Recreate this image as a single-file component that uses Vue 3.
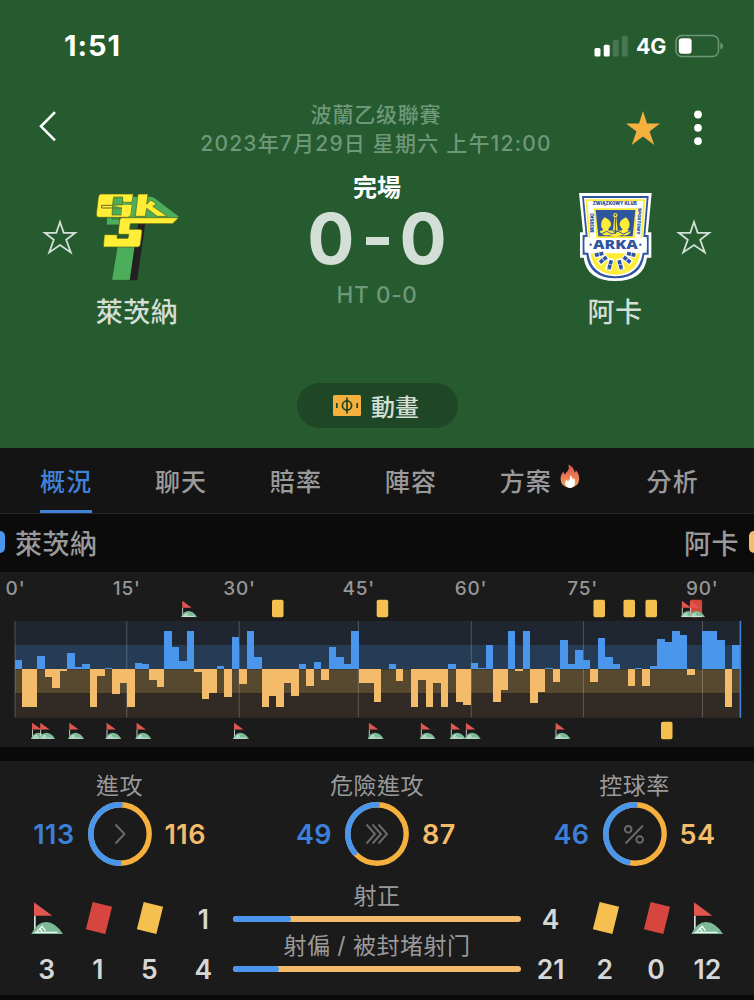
<template>
  <div class="page">
    <svg class="defs" width="0" height="0">
      <symbol id="corner" viewBox="0 0 32 32">
        <path d="M3 13.5h1.700V31H3z" fill="#d9dedb" />
        <path d="M0.3 32Q6 20.2 15 20Q24.500 20.2 32 32z" fill="#7dbb98" />
        <path d="M3.500 30.400H26.500M6 29.500L11.200 24.300L14.600 28.800M8 26.500Q10.500 27 10.800 30" fill="none" stroke="#f1f7f3" stroke-width="1.400" />
        <path d="M3 0.3L21.300 13.700H3z" fill="#e25650" />
      </symbol>
    </svg>

    <header class="header">
      <div class="status-bar">
        <span class="clock">1:51</span>
        <div class="status-icons">
          <svg width="35" height="22" viewBox="0 0 35 22">
            <rect x="0.500" y="13" width="6" height="8.500" rx="1.500" fill="#fff" />
            <rect x="9.700" y="9.700" width="6" height="11.800" rx="1.500" fill="#fff" />
            <rect x="18.800" y="5" width="6" height="16.500" rx="1.500" fill="#477653" />
            <rect x="27.800" y="0.700" width="6" height="20.800" rx="1.500" fill="#477653" />
          </svg>
          <span class="network">4G</span>
          <svg width="49" height="24" viewBox="0 0 49 24">
            <rect x="1" y="1.500" width="42.500" height="21" rx="6" fill="none" stroke="#709679" stroke-width="1.500" />
            <rect x="3.800" y="4.200" width="12.800" height="15.600" rx="3" fill="#fff" />
            <path d="M45.300 8.500Q48 9.500 48 12T45.300 15.500z" fill="#709679" />
          </svg>
        </div>
      </div>

      <div class="title-row">
        <svg class="back" width="20" height="32" viewBox="0 0 20 32">
          <path d="M17 2.200L3 16.300L17 30.300" fill="none" stroke="#fff" stroke-width="2.600" />
        </svg>
        <div class="match-info">
          <div class="league">波蘭乙级聯賽</div>
          <div class="date">2023年7月29日 星期六 上午12:00</div>
        </div>
        <svg class="fav" width="34" height="34" viewBox="0 0 34 34">
          <path d="M17 0L21 12.500H34L23.500 20.500L28.300 34L17 25.500L5.700 34L10.500 20.500L0 12.500H13z" fill="#f5b03e" />
        </svg>
        <svg class="more" width="8" height="36" viewBox="0 0 8 36">
          <circle v-for="cy in [4.5, 17.8, 31.100]" :key="cy" cx="4" :cy="cy" r="3.900" fill="#fff" />
        </svg>
      </div>

      <div class="score-row">
        <svg class="team-star" width="36" height="36" viewBox="0 0 36 36">
          <path :d="starPath" fill="none" stroke="#d3ded5" stroke-width="1.800" />
        </svg>
        <div class="team">
          <svg width="85" height="88" viewBox="195 68 255 264">
            <path d="M262 225H316L300 330H245z" fill="#4cae5b" stroke="#1f4a26" stroke-width="2" />
            <path d="M325 158H346L322 326Q321 330 316 330H300L314 228z" fill="#231f20" />
            <path d="M230 140H270V164H229zM246 78H362Q370 79 378 85L447 138L440 146H246z" fill="#4cae5b" stroke="#1f4a26" stroke-width="2" />
            <path d="M212 71H310L306 96H276V84H250L248 104H304L301 133Q300 141 292 141H206Q198 140 199 131L205 80Q206 72 212 71z" fill="#ffee35" stroke="#4b5c1a" stroke-width="2" />
            <path d="M249 80H278V104H305M248 104L246 134H275L277 113" fill="#4cae5b" stroke="#4b5c1a" stroke-width="2" />
            <path d="M248 105H215V113H277" fill="none" stroke="#6b6a1c" stroke-width="3" />
            <path d="M277 103H305L301 135H274z" fill="#ffee35" />
            <path d="M324 71H354L350 102L362 90L372 95L378 102L368 108L412 138H382L350 114L346 138H316z" fill="#ffee35" stroke="#4b5c1a" stroke-width="2" />
            <path d="M276 142H446L428 160H301L299 177H330Q337 177 336 185L331 223Q330 230 323 230H220L223 193H262L261 204H294L296 192H270Q264 192 265 184L269 150Q270 142 276 142z" fill="#ffee35" stroke="#4b5c1a" stroke-width="2" />
          </svg>
          <div class="team-name">萊茨納</div>
        </div>
        <div class="score">
          <div class="state">完場</div>
          <div class="goals"><span>0</span><i class="dash"></i><span>0</span></div>
          <div class="half">HT 0-0</div>
        </div>
        <div class="team guest">
          <svg width="73" height="88" viewBox="87 68 219 264">
            <path d="M87 68H305L294 186H304V262H291Q282 331 196 332Q110 331 101 262H90V186H99z" fill="#fff" />
            <path d="M96 77H296L286 194H296V253H283Q275 322 196 324Q117 322 109 253H98V194H107z" fill="#2f55a0" />
            <path d="M102 83H290L280 200H290V247H278Q269 316 196 318Q123 316 115 247H104V200H113z" fill="#fff" />
            <path d="M106 87H286L277 202H116zM122 249H270Q263 310 196 313Q129 310 122 249z" fill="#ffec37" />
            <path d="M112 92H280L272 202H121z" fill="#fff" />
            <path d="M132 114H261L254 203H139z" fill="#ffec37" />
            <path d="M137 119H256L248 198H145z" fill="#2f55a0" />
            <path d="M196 128a7 7 0 0 1 3 13L203 180Q212 183 218 178L209 165Q207 150 228 141Q242 155 238 170L232 179L243 183Q236 199 216 194L196 200L176 194Q156 199 149 183L160 179L154 170Q150 155 164 141Q185 150 183 165L174 178Q180 183 189 180L193 141a7 7 0 0 1 3-13z" fill="#ffec37" />
            <path d="M146 187q8 8 16 0t16 0t17 0t17 0t17 0t17 0M196 140V191M188 182h16" fill="none" stroke="#2f55a0" stroke-width="3" />
            <circle cx="196" cy="134" r="3" fill="#2f55a0" />
            <path d="M104 206H290V239H104z" fill="#fff" />
            <text x="196" y="236" class="crest-name" textLength="134" lengthAdjust="spacingAndGlyphs">ARKA</text>
            <circle cx="122" cy="223" r="3.500" fill="#2f55a0" />
            <circle cx="271" cy="223" r="3.500" fill="#2f55a0" />
            <text x="194" y="105" class="crest-small" textLength="132" lengthAdjust="spacingAndGlyphs">ZWIĄZKOWY KLUB</text>
            <text transform="translate(132 158) rotate(-90)" class="crest-small" textLength="57" lengthAdjust="spacingAndGlyphs">MORSKI</text>
            <text transform="translate(262 153) rotate(94)" class="crest-small" textLength="80" lengthAdjust="spacingAndGlyphs">SPORTOWY</text>
            <g stroke="#fff" stroke-width="18">
              <path d="M163 248L132 255M172 258L146 278M184 265L174 300M206 265L216 300M219 258L245 278M228 248L259 255" />
            </g>
            <g stroke="#2f55a0" stroke-width="11" stroke-dasharray="12 2">
              <path d="M160 249L133 255M170 260L149 277M184 270L176 298M207 270L215 298M221 260L242 277M231 249L258 255" />
            </g>
          </svg>
          <div class="team-name">阿卡</div>
        </div>
        <svg class="team-star" width="36" height="36" viewBox="0 0 36 36">
          <path :d="starPath" fill="none" stroke="#d3ded5" stroke-width="1.800" />
        </svg>
      </div>

      <button class="anim-btn">
        <svg width="28" height="21" viewBox="0 0 28 21">
          <rect width="28" height="21" rx="1.500" fill="#f5b03e" />
          <circle cx="14" cy="10.500" r="4.600" fill="none" stroke="#1f4525" stroke-width="1.700" />
          <path d="M14 2.500V18.500M3.800 8V13M24.200 8V13" stroke="#1f4525" stroke-width="1.700" />
        </svg>
        <span>動畫</span>
      </button>
    </header>

    <nav class="tabs">
      <div v-for="(tab, i) in tabs" :key="tab" class="tab" :class="{ active: i === 0 }">
        <span>{{ tab }}</span>
        <svg v-if="tab === '方案'" class="flame" width="20" height="25" viewBox="0 0 20 25">
          <defs>
            <linearGradient id="fire" x1="0" y1="0" x2="0" y2="1">
              <stop offset="0" stop-color="#e2504a" />
              <stop offset="1" stop-color="#f3a65c" />
            </linearGradient>
          </defs>
          <path d="M8.500 0.500Q14 3 14.500 8.500Q16 8 15.800 6Q19.500 10 19.200 15.500Q18.500 23 10 24Q1 23 0.600 15.500Q0.300 11 3.500 7.500Q3.500 9.800 5 10.500Q6 8.500 8 6.500Q9.500 4 8.500 0.500z" fill="url(#fire)" />
          <path d="M10.500 11Q12.500 13 12.500 15.500L14 13.800Q15.500 17 14.800 20Q13.800 23.500 10.500 24Q5.500 23.500 5.200 19.500Q5 17.500 6.500 15.500L8 17.500Q10.500 15 10.500 11z" fill="#fff" />
        </svg>
      </div>
    </nav>

    <div class="legend">
      <div class="legend-team">
        <i class="swatch home"></i>
        <span>萊茨納</span>
      </div>
      <div class="legend-team">
        <span>阿卡</span>
        <i class="swatch away"></i>
      </div>
    </div>

    <section class="momentum">
      <svg width="754" height="175" viewBox="0 0 754 175">
        <text v-for="t in ticks" :key="t.label" :x="t.x" y="22.700" class="tick">{{ t.label }}</text>

        <rect x="15" y="49" width="726" height="24" fill="#1f262f" />
        <rect x="15" y="73" width="726" height="24.400" fill="#263c54" />
        <rect x="15" y="97.400" width="726" height="23.800" fill="#574930" />
        <rect x="15" y="121.200" width="726" height="24.500" fill="#322a24" />
        <path v-for="x in gridLines" :key="x" :d="`M${x} 49V145.700`" stroke="#fff" stroke-opacity="0.220" />

        <rect
          v-for="bar in bars"
          :key="bar.x"
          :x="bar.x"
          :y="bar.y"
          :width="barWidth"
          :height="bar.h"
          :fill="bar.home ? '#4a96ec' : '#f4bc6a'"
          shape-rendering="crispEdges"
        />
        <rect x="739.600" y="49" width="1.600" height="96.700" fill="#3f82d2" />

        <template v-for="(e, i) in events" :key="i">
          <use v-if="e.type === 'corner'" href="#corner" :x="e.x" :y="e.home ? 28.7 : 150.5" width="16.500" height="16.500" />
          <rect
            v-else
            :x="e.x"
            :y="e.home ? 27.7 : 149.7"
            :width="e.type === 'red' ? 12.3 : 11.500"
            height="17.500"
            rx="1.800"
            :fill="e.type === 'red' ? '#d6463f' : '#f5c04f'"
          />
        </template>
      </svg>
    </section>

    <section class="stats">
      <div class="rings">
        <div v-for="r in rings" :key="r.title" class="ring-item">
          <div class="stat-title">{{ r.title }}</div>
          <div class="ring-row">
            <span class="home-num">{{ r.home }}</span>
            <svg width="64" height="64" viewBox="0 0 64 64">
              <circle cx="32" cy="32" r="29.200" fill="none" stroke="#f5b03e" stroke-width="5.400" />
              <path :d="arc(r.home / (r.home + r.away))" fill="none" stroke="#4a96ec" stroke-width="5.600" stroke-linecap="round" />
              <path :d="r.icon" fill="none" stroke="#6c6c6c" stroke-width="1.900" />
            </svg>
            <span class="away-num">{{ r.away }}</span>
          </div>
        </div>
      </div>

      <div class="details">
        <div class="side">
          <div v-for="c in homeCounts" :key="c.type" class="count">
            <svg v-if="c.type === 'corner'" class="count-icon" width="32" height="32"><use href="#corner" /></svg>
            <i v-else class="card" :class="c.type"></i>
            <span class="num">{{ c.value }}</span>
          </div>
          <div class="shots">
            <span class="num">1</span>
            <span class="num">4</span>
          </div>
        </div>

        <div class="bars">
          <div v-for="s in shots" :key="s.title" class="shot">
            <div class="stat-title">{{ s.title }}</div>
            <div class="track">
              <div class="fill" :style="{ width: s.percent + '%' }"></div>
            </div>
          </div>
        </div>

        <div class="side">
          <div class="shots">
            <span class="num">4</span>
            <span class="num">21</span>
          </div>
          <div v-for="c in awayCounts" :key="c.type" class="count">
            <svg v-if="c.type === 'corner'" class="count-icon" width="32" height="32"><use href="#corner" /></svg>
            <i v-else class="card" :class="c.type"></i>
            <span class="num">{{ c.value }}</span>
          </div>
        </div>
      </div>
    </section>
  </div>
</template>

<script setup>
const starPath = 'M18 3L21.700 13.800H33.200L24.200 20.800L28.800 33.500L18 26L7.200 33.500L11.800 20.800L2.800 13.800H14.300z'

const tabs = ['概況', '聊天', '賠率', '陣容', '方案', '分析']

const ticks = [
  { label: "0'", x: 15.5 },
  { label: "15'", x: 126.7 },
  { label: "30'", x: 239.5 },
  { label: "45'", x: 358.7 },
  { label: "60'", x: 471 },
  { label: "75'", x: 582.7 },
  { label: "90'", x: 702.2 },
]
const gridLines = [15, 126.8, 239.2, 358.3, 471.3, 583.4, 702.5]

// positive = home pressure, negative = away pressure
const values = [
  9.5, -38, -38, 13.5, -8, -19, -1.5, 16, 2.5, 5, -38, -7, 1.3, -25, -13.5,
  -38, 6.5, 5.5, -11, -18, 38, 22, 8, 38, -3, -29.5, -23.5, 3.3, -28, 32,
  -15, 38, 12.5, -38, -27, -38, -13.5, -27, 5, -17, 7, -11, 22.5, 12.5, 5, 38,
  -13.5, -14, -32.5, 0, 5, -11.5, 0, -38, -11, -38, -13.5, -38, 5, -32.5, -36,
  6.5, 1.3, 24, -33, -21, 38, -1.5, 38, -34, -22.5, 1.3, -12.5, 29.5, 5, 19,
  9, -12.5, 31, 12, 5, 0, -17, 1.3, -17, 3.3, 30, 27, 38, 34.5, -5.5, 0,
  38, 38, 29.5, -38, 24,
]
const barWidth = 7.47
const baseline = 97.4
const bars = values.map((v, i) => ({
  x: 15 + i * barWidth,
  y: v > 0 ? baseline - v : baseline,
  h: Math.abs(v),
  home: v > 0,
}))

const events = [
  { type: 'corner', x: 180.7, home: true },
  { type: 'yellow', x: 272, home: true },
  { type: 'yellow', x: 376.7, home: true },
  { type: 'yellow', x: 593.5, home: true },
  { type: 'yellow', x: 623.5, home: true },
  { type: 'yellow', x: 645.5, home: true },
  { type: 'corner', x: 680.3, home: true },
  { type: 'red', x: 689.8, home: true },
  { type: 'corner', x: 688.7, home: true },
  { type: 'corner', x: 30.5 },
  { type: 'corner', x: 38.7 },
  { type: 'corner', x: 67.7 },
  { type: 'corner', x: 105 },
  { type: 'corner', x: 135 },
  { type: 'corner', x: 232.5 },
  { type: 'corner', x: 367.3 },
  { type: 'corner', x: 419.3 },
  { type: 'corner', x: 449.3 },
  { type: 'corner', x: 464.3 },
  { type: 'corner', x: 554 },
  { type: 'yellow', x: 661 },
]

const rings = [
  { title: '進攻', home: 113, away: 116, icon: 'M27.5 22.5L36.500 32L27.5 41.500' },
  { title: '危險進攻', home: 49, away: 87, icon: 'M21.500 22.5L30 32L21.500 41.500M27.5 22.5L36 32L27.5 41.500M33.500 22.5L42 32L33.500 41.500' },
  { title: '控球率', home: 46, away: 54, icon: 'M40 23.500L22.500 41.500M28.500 27.300a3.300 3.300 0 1 1-6.600 0a3.300 3.300 0 1 1 6.600 0M40 37.500a3.300 3.300 0 1 1-6.600 0a3.300 3.300 0 1 1 6.600 0' },
]

// counter-clockwise arc from the top of the ring
function arc(share) {
  const a = share * Math.PI * 2
  const r = 29.2
  const x = 32 - r * Math.sin(a)
  const y = 32 - r * Math.cos(a)
  return `M32 ${32 - r}A${r} ${r} 0 ${share > 0.5 ? 1 : 0} 0 ${x} ${y}`
}

const homeCounts = [
  { type: 'corner', value: 3 },
  { type: 'red', value: 1 },
  { type: 'yellow', value: 5 },
]
const awayCounts = [
  { type: 'yellow', value: 2 },
  { type: 'red', value: 0 },
  { type: 'corner', value: 12 },
]
const shots = [
  { title: '射正', percent: 20 },
  { title: '射偏 / 被封堵射门', percent: 16 },
]
</script>

<style>
body {
  background: #0a0a0a;
}
</style>

<style scoped>
.page {
  width: 754px;
  height: 1000px;
  overflow: hidden;
  background: #0a0a0a;
  color: #9a9a9a;
  font-family: Inter, 'Noto Sans CJK TC', sans-serif;
}

.page * {
  box-sizing: border-box;
}

.page svg {
  display: block;
  flex-shrink: 0;
}

.page .defs {
  position: absolute;
}

.header {
  height: 448px;
  background: #265a2f;
  display: flex;
  flex-direction: column;
}

.status-bar {
  height: 91px;
  padding: 0 30px 0 64px;
  display: flex;
  align-items: center;
  justify-content: space-between;
  color: #fff;
}

.clock {
  font-size: 29px;
  font-weight: 700;
  letter-spacing: 0.9px;
}

.status-icons {
  display: flex;
  align-items: center;
}

.network {
  margin: 0 9px 0 7px;
  font-size: 21.5px;
  font-weight: 700;
  letter-spacing: -0.3px;
}

.title-row {
  height: 74px;
  padding: 0 52px 0 38px;
  display: flex;
  align-items: center;
}

.back {
  margin-top: -4px;
}

.match-info {
  flex: 1;
  margin: 1px 0 0 68px;
  text-align: center;
  font-size: 21px;
  line-height: 29px;
  letter-spacing: 0.8px;
  color: #6e9878;
  white-space: nowrap;
}

.league {
  font-weight: 500;
}

.date {
  font-weight: 500;
  letter-spacing: 1.2px;
}

.more {
  margin-left: 34px;
}

.score-row {
  height: 165px;
  padding: 7px 42px 0;
  display: flex;
}

.team-star {
  margin-top: 47px;
}

.team {
  width: 118px;
  padding-top: 21px;
  display: flex;
  flex-direction: column;
  align-items: center;
}

.guest {
  padding-right: 4px;
}

.team-name {
  margin-top: 12px;
  font-size: 27px;
  font-weight: 500;
  line-height: 40px;
  letter-spacing: 0.5px;
  color: #d3ded5;
}

.score {
  flex: 1;
  display: flex;
  flex-direction: column;
  align-items: center;
}

.state {
  font-size: 24px;
  font-weight: 700;
  line-height: 32px;
  color: #fff;
}

.goals {
  display: flex;
  align-items: center;
  height: 68px;
  font-size: 70px;
  font-weight: 700;
  color: #d3dfd6;
}

.dash {
  width: 23px;
  height: 8px;
  margin: 5px 11px 0;
  background: #d3dfd6;
}

.half {
  margin-top: 7px;
  font-size: 22.5px;
  font-weight: 500;
  line-height: 32px;
  letter-spacing: 0.7px;
  color: #6e9878;
}

.anim-btn {
  align-self: center;
  margin-top: 53px;
  width: 161px;
  height: 45px;
  padding: 0 2px 1px 0;
  border: none;
  border-radius: 23px;
  background: #1f4726;
  display: flex;
  align-items: center;
  justify-content: center;
  gap: 10px;
  font-family: inherit;
  font-size: 24px;
  font-weight: 500;
  color: #d3ded5;
}

.tabs {
  height: 66px;
  padding: 0 55px 0 40px;
  background: #141414;
  border-bottom: 1px solid #292929;
  display: flex;
  justify-content: space-between;
}

.tab {
  height: 65px;
  padding-top: 1px;
  border-bottom: 3px solid transparent;
  display: flex;
  align-items: center;
  font-size: 25px;
  font-weight: 500;
  letter-spacing: 1.2px;
}

.tab.active {
  color: #3f82d8;
  border-color: #3f82d8;
}

.flame {
  margin: -7px 4px 0 8px;
}

.legend {
  height: 58px;
  padding-bottom: 2px;
  background: #0b0b0b;
  display: flex;
  align-items: center;
  justify-content: space-between;
  font-size: 27px;
  font-weight: 500;
  letter-spacing: 0.5px;
}

.legend-team {
  display: flex;
  align-items: center;
  gap: 10px;
}

.swatch {
  width: 21px;
  height: 22px;
  border-radius: 5px;
}

.swatch.home {
  margin-left: -16px;
  background: #4a96ec;
}

.swatch.away {
  margin-right: -16px;
  background: #f4bc6a;
}

.momentum {
  height: 175px;
  background: #1b1b1b;
}

.tick {
  font-size: 19px;
  font-weight: 500;
  letter-spacing: 0.8px;
  text-anchor: middle;
  fill: #969696;
}

.crest-name {
  font-family: 'Open Sans', sans-serif;
  font-size: 36px;
  font-weight: 800;
  text-anchor: middle;
  fill: #2f55a0;
}

.crest-small {
  font-size: 14px;
  font-weight: 900;
  text-anchor: middle;
  fill: #2f55a0;
}

.stats {
  height: 234px;
  margin-top: 14px;
  background: #1b1b1b;
}

.rings {
  display: grid;
  grid-template-columns: repeat(3, 257.5px);
  justify-content: center;
}

.stat-title {
  font-size: 23px;
  line-height: 34px;
  letter-spacing: 0.5px;
  text-align: center;
}

.ring-item {
  padding-top: 8px;
}

.ring-item .stat-title {
  height: 33px;
}

.ring-row {
  display: grid;
  grid-template-columns: 1fr 64px 1fr;
  gap: 13px;
  align-items: center;
  font-size: 27px;
  font-weight: 600;
  letter-spacing: 0.4px;
}

.home-num {
  text-align: right;
  color: #3b7fd9;
}

.away-num {
  color: #f4bc6a;
}

.details {
  height: 128px;
  margin-top: 12px;
  padding: 0 21px;
  display: flex;
  justify-content: space-between;
}

.side {
  display: flex;
}

.count,
.shots {
  width: 51.3px;
  padding-top: 24px;
  display: flex;
  flex-direction: column;
  align-items: center;
  justify-content: space-between;
  height: 107px;
}

.shots {
  width: 57px;
  padding-top: 25px;
}

.num {
  font-size: 26.5px;
  font-weight: 600;
  line-height: 32px;
  color: #d6d6d6;
}

.card {
  width: 20px;
  height: 28px;
  margin: 2px 0 2px 2px;
  transform: rotate(14deg);
}

.card.red {
  background: #d6463f;
}

.card.yellow {
  background: #f5c04f;
}

.bars {
  width: 288px;
}

.shot {
  height: 50px;
}

.bars .stat-title {
  padding-top: 1px;
  height: 35px;
}

.track {
  margin-top: 3px;
  height: 6px;
  border-radius: 3px;
  background: #f4bc6a;
  overflow: hidden;
}

.fill {
  height: 6px;
  border-radius: 3px;
  background: #4a96ec;
}
</style>
